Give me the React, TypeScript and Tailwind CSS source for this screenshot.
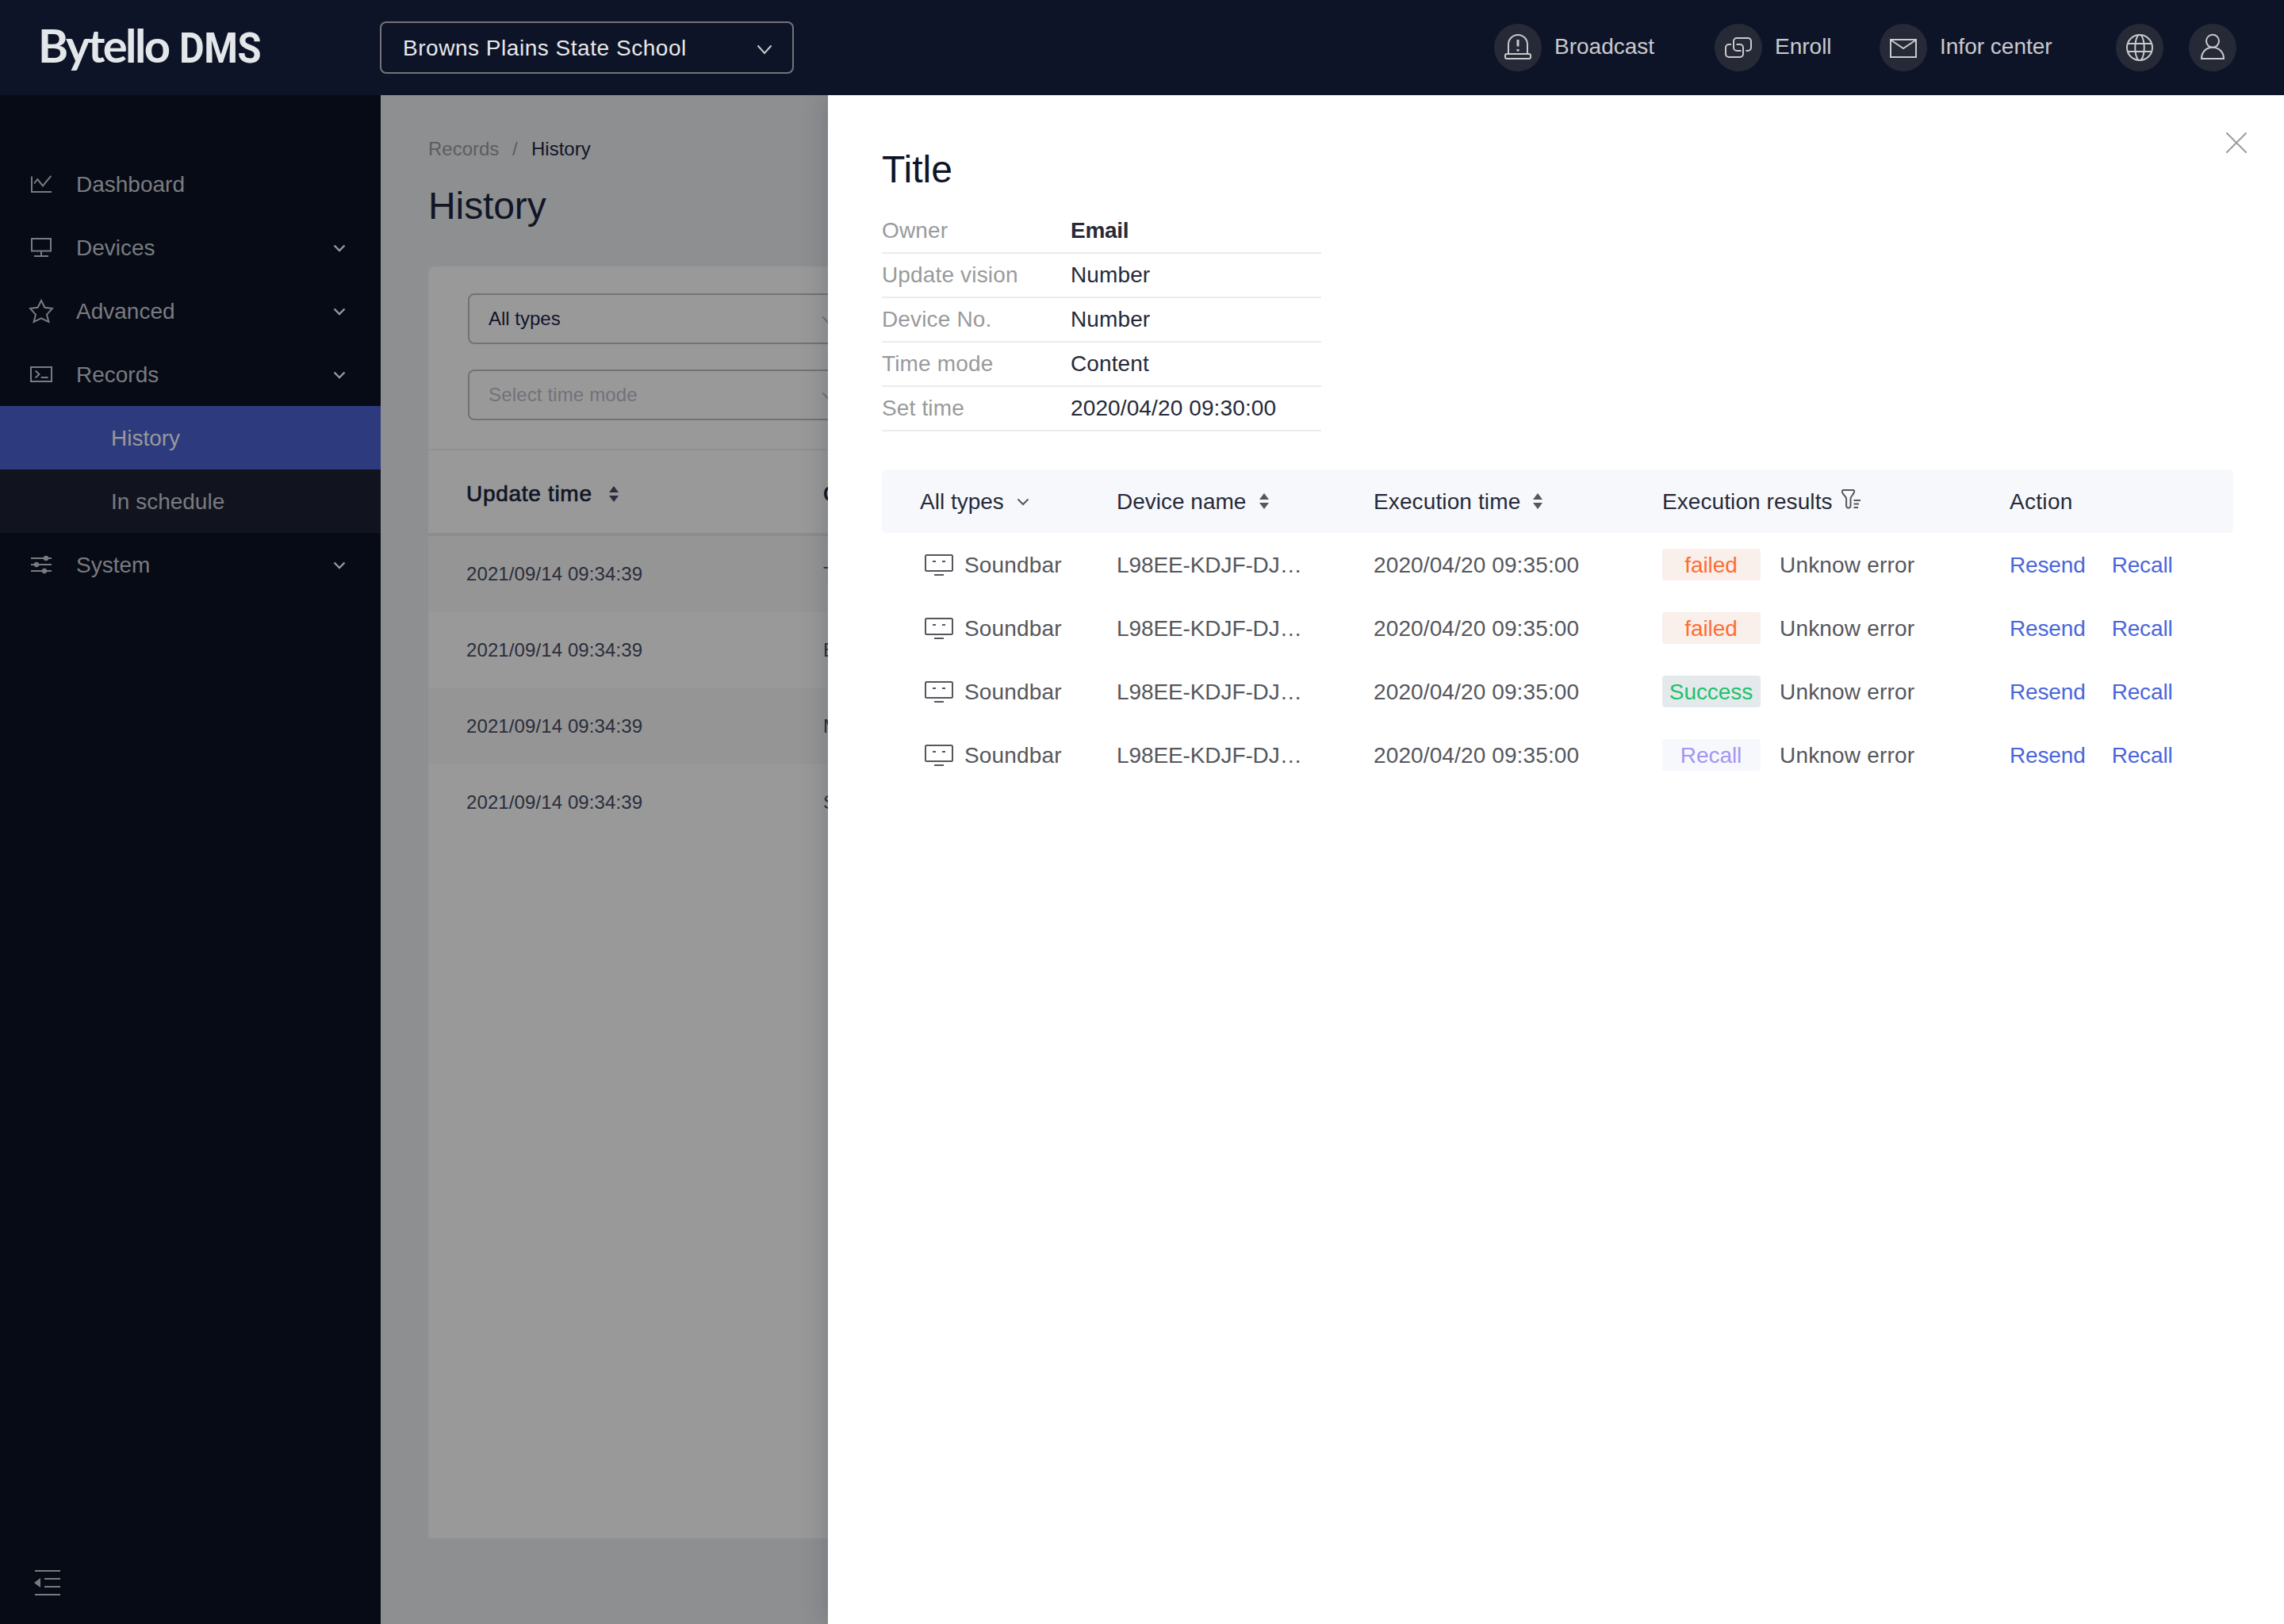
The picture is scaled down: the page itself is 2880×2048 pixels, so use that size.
import type { ReactNode } from 'react';

/* ---------- shared glyphs ---------- */

function Chevron({ className, w = 14, h = 8, stroke = 2.4 }: { className: string; w?: number; h?: number; stroke?: number }) {
  return (
    <svg width={w + 2} height={h + 2} viewBox={`-1 -1 ${w + 2} ${h + 2}`} className={className} fill="none" stroke="currentColor" strokeWidth={stroke}>
      <path d={`M0.5 0.5L${w / 2} ${h - 1}L${w - 0.5} 0.5`} />
    </svg>
  );
}

function SortIcon({ className }: { className: string }) {
  return (
    <svg width="12" height="20" viewBox="0 0 12 20" className={className} fill="currentColor">
      <path d="M6 0L12 8H0zM0 12H12L6 20z" />
    </svg>
  );
}

function HeaderIcon({ children }: { children: ReactNode }) {
  return (
    <span className="flex size-[60px] shrink-0 rounded-full bg-[#262936] text-[#c9cacd]">
      <svg width="60" height="60" viewBox="0 0 60 60" fill="none" stroke="currentColor" strokeWidth="2">
        {children}
      </svg>
    </span>
  );
}

const alarmIcon = (
  <>
    <rect x="14" y="38" width="32" height="6" rx="2" />
    <path d="M18 38V26a12 12 0 0 1 24 0V38" />
    <path d="M30 20V28.5" strokeWidth="3" />
    <path d="M30 32V34.6" strokeWidth="3" />
  </>
);

const enrollIcon = (
  <>
    <path d="M33.5 34H28a4 4 0 0 1-4-4V22a4 4 0 0 1 4-4H42a4 4 0 0 1 4 4v8a4 4 0 0 1-4 4H39.5" />
    <path d="M27.5 26H32a4 4 0 0 1 4 4v8a4 4 0 0 1-4 4H18a4 4 0 0 1-4-4v-8a4 4 0 0 1 4-4H21" />
  </>
);

const mailIcon = (
  <>
    <rect x="14" y="20" width="32" height="22" />
    <path d="M15 21L30 31L45 21" />
  </>
);

const globeIcon = (
  <>
    <circle cx="30" cy="30" r="16" />
    <path d="M15 25H45M15 35H45" />
    <path d="M28 14.5C23 22 23 38 28 45.5M32 14.5C37 22 37 38 32 45.5" />
  </>
);

const userIcon = (
  <>
    <circle cx="30" cy="21.8" r="8" />
    <path d="M16 44C16 35.5 22 29.8 30 29.8S44 35.5 44 44Z" />
  </>
);

/* ---------- sidebar ---------- */

const dashboardIcon = <path d="M4 6.5V26H29M7 15.5L11.3 10L18 18.3L28.3 5.8" />;
const devicesIcon = <path d="M4 5H28V20.5H4ZM16 20.5V27M7 27H25" />;
const starIcon = <path d="M16 3L20.4 11.8L30 13L23 20.7L25.4 30L16 25.4L6.6 30L9 20.7L2 13L11.6 11.8Z" />;
const recordsIcon = <path d="M3 7H29V25H3ZM8.7 11.5L13.5 16L8.7 20.5M15.7 20H24.7" />;
const systemIcon = (
  <>
    <path d="M3 8H29M3 16H29M3 24H29" />
    <g fill="currentColor" stroke="none">
      <circle cx="22" cy="8" r="3.2" />
      <circle cx="10" cy="16" r="3.2" />
      <circle cx="20" cy="24" r="3.2" />
    </g>
  </>
);

function NavItem({ icon, label, expandable = true }: { icon: ReactNode; label: string; expandable?: boolean }) {
  return (
    <div className="flex h-20 items-center pr-11 pl-9 text-[#7a7b80]">
      <svg width="32" height="32" viewBox="0 0 32 32" fill="none" stroke="currentColor" strokeWidth="2">
        {icon}
      </svg>
      <span className="ml-7 flex-1 pt-px">{label}</span>
      {expandable && <Chevron className="mt-px text-[#98989a]" />}
    </div>
  );
}

function Sidebar() {
  return (
    <aside className="flex w-[480px] shrink-0 flex-col bg-[#070b16] pt-[72px] text-[28px]">
      <NavItem icon={dashboardIcon} label="Dashboard" expandable={false} />
      <NavItem icon={devicesIcon} label="Devices" />
      <NavItem icon={starIcon} label="Advanced" />
      <NavItem icon={recordsIcon} label="Records" />
      <div className="flex h-20 items-center bg-[#2d3b7e] pt-px pl-[140px] text-[#999999]">History</div>
      <div className="flex h-20 items-center bg-[#11141f] pt-px pl-[140px] text-[#7a7b80]">In schedule</div>
      <NavItem icon={systemIcon} label="System" />
      <svg width="36" height="32" viewBox="0 0 36 32" className="mt-auto mb-9 ml-[42px] text-[#7a7b80]" fill="currentColor">
        <path d="M2 0H34V2H2zM14 10H34V12H14zM14 20H34V22H14zM2 30H34V32H2zM1 16L9 10V22z" />
      </svg>
    </aside>
  );
}

/* ---------- top bar ---------- */

function TopBar() {
  return (
    <header className="flex h-[120px] shrink-0 items-center bg-[#0e1428] pr-[60px] text-[28px]">
      <div className="flex w-[479px] shrink-0 items-baseline pb-[3px] pl-12 text-[#e3e7ea]">
        <span className="w-[178px] font-['Lato'] text-[58px] leading-[72px] font-bold tracking-[-2.6px]">Bytello</span>
        <span className="w-[120px] origin-left scale-x-[0.92] font-['Roboto'] text-[53px] leading-[72px] font-bold tracking-[-0.5px]">DMS</span>
      </div>
      <div className="flex h-[66px] w-[522px] items-center justify-between rounded-lg border-2 border-[#737377] pr-[25px] pl-[27px] text-[#e7e8ea]">
        <span className="pt-px tracking-[0.53px]">Browns Plains State School</span>
        <Chevron w={18} h={11} stroke={2} className="mt-1 text-[#c9cacd]" />
      </div>
      <div className="ml-auto flex items-center text-[#c9cacd]">
        <HeaderIcon>{alarmIcon}</HeaderIcon>
        <span className="w-[218px] shrink-0 pb-[3px] pl-4">Broadcast</span>
      </div>
      <div className="flex w-[208px] items-center text-[#c9cacd]">
        <HeaderIcon>{enrollIcon}</HeaderIcon>
        <span className="pb-[3px] pl-4">Enroll</span>
      </div>
      <div className="flex w-[298px] items-center text-[#c9cacd]">
        <HeaderIcon>{mailIcon}</HeaderIcon>
        <span className="pb-[3px] pl-4">Infor center</span>
      </div>
      <div className="flex gap-8">
        <HeaderIcon>{globeIcon}</HeaderIcon>
        <HeaderIcon>{userIcon}</HeaderIcon>
      </div>
    </header>
  );
}

/* ---------- history list (behind the drawer) ---------- */

const historyRows = ['T', 'E', 'M', 'S'];

function HistoryPage() {
  return (
    <main className="flex w-[2400px] shrink-0 flex-col bg-[#8e8f91] pr-[60px] pl-[60px]">
      <div className="mt-[52px] flex h-8 items-center text-[24px] text-[#5c5d60]">
        <span className="w-[106px]">Records</span>
        <span className="w-6">/</span>
        <span className="text-[#11152a]">History</span>
      </div>
      <h1 className="mt-6 h-16 text-[48px] leading-[64px] tracking-[-0.1px] text-[#111525]">History</h1>
      <section className="mt-11 h-[1604px] rounded-t-lg bg-[#999999]">
        <div className="flex h-[232px] flex-col gap-8 border-b-2 border-[#8e8f91] pt-[34px] pl-[50px] text-[24px]">
          <div className="flex h-16 w-[480px] items-center justify-between rounded-lg border-2 border-[#727279] pr-3 pl-6 text-[#11152a]">
            <span>All types</span>
            <Chevron w={18} h={11} stroke={2} className="mt-1 text-[#727279]" />
          </div>
          <div className="flex h-16 w-[480px] items-center justify-between rounded-lg border-2 border-[#727279] pr-3 pl-6 text-[#727279]">
            <span className="tracking-[0.15px]">Select time mode</span>
            <Chevron w={18} h={11} stroke={2} className="mt-1 text-[#727279]" />
          </div>
        </div>
        <div className="flex h-[108px] items-center pt-0.5 pl-12 text-[28px] text-[#111525] shadow-[inset_0_-4px_0_#8b8d90]">
          <div className="flex w-[450px] items-center">
            <span className="tracking-[0.7px] [-webkit-text-stroke:0.7px_#111525]">Update time</span>
            <SortIcon className="ml-[21px] text-[#2a2e3c]" />
          </div>
          <span className="[-webkit-text-stroke:0.7px_#111525]">C</span>
        </div>
        {historyRows.map((name) => (
          <div key={name} className="flex h-24 items-center pl-12 text-[24px] text-[#2a2e3c] odd:bg-[#959595]">
            <span className="w-[450px] tracking-[0.1px]">2021/09/14 09:34:39</span>
            <span>{name}</span>
          </div>
        ))}
      </section>
    </main>
  );
}

/* ---------- drawer ---------- */

const details = [
  { label: 'Owner', value: 'Email', strong: true },
  { label: 'Update vision', value: 'Number' },
  { label: 'Device No.', value: 'Number' },
  { label: 'Time mode', value: 'Content' },
  { label: 'Set time', value: '2020/04/20 09:30:00' },
];

const results = [
  { tag: 'failed', tone: 'bg-[#f9efeb] text-[#ff6d33]' },
  { tag: 'failed', tone: 'bg-[#f9efeb] text-[#ff6d33]' },
  { tag: 'Success', tone: 'bg-[#e4e9ec] text-[#1fc16b]' },
  { tag: 'Recall', tone: 'bg-[#f7f8fc] text-[#a296f2]' },
];

function SoundbarIcon() {
  return (
    <svg width="36" height="28" viewBox="0 0 36 28" className="mt-px" fill="none" stroke="currentColor" strokeWidth="2">
      <rect x="1" y="1" width="34" height="20" rx="1.5" />
      <path d="M12 26H24M10 9H14M22 9H26" />
    </svg>
  );
}

function FilterIcon() {
  return (
    <svg width="24" height="26" viewBox="0 0 24 26" className="mb-1.5 ml-[11px] text-[#55575d]" fill="none" stroke="currentColor" strokeWidth="2">
      <path d="M2.5 2H14.5Q16.5 2 16 4.5Q15.8 6 13 9.5Q11.5 11.5 11.5 13V22Q11.3 24.5 8.8 24.5Q6.3 24.5 6.1 22V13Q6.1 11.5 4.2 9.5Q1 6 1 4.2Q.6 2 2.5 2Z" />
      <path d="M15.5 15H24M15.5 19.5H22M15.5 24H21" />
    </svg>
  );
}

function Drawer() {
  return (
    <div className="absolute inset-y-0 right-0 flex w-[1836px] flex-col bg-white pr-16 pl-[68px] text-[28px] shadow-[-2px_0_32px_rgba(10,20,50,0.2)]">
      <svg width="26" height="26" viewBox="0 0 26 26" className="absolute top-[47px] right-[47px] text-[#9b9da1]" stroke="currentColor" strokeWidth="2">
        <path d="M0 0L26 26M26 0L0 26" />
      </svg>
      <h2 className="mt-[62px] h-16 text-[48px] leading-[64px] text-[#0e1428]">Title</h2>
      <dl className="mt-[18px] w-[554px]">
        {details.map((d) => (
          <div key={d.label} className="flex h-14 items-center border-b-2 border-[#eeebea]">
            <dt className="w-[238px] tracking-[0.15px] text-[#999a9c]">{d.label}</dt>
            <dd className={d.strong ? 'font-bold tracking-[-0.3px] text-[#262a38]' : 'tracking-[0.12px] text-[#262a38]'}>{d.value}</dd>
          </div>
        ))}
      </dl>
      <div className="mt-12 grid h-20 grid-cols-[248px_324px_364px_438px_1fr] items-center rounded-md bg-[#f7f8fc] pl-12 text-[#262a38]">
        <div className="flex items-center">
          <span className="pt-0.5">All types</span>
          <Chevron stroke={2} className="mt-0.5 ml-4 text-[#55575d]" />
        </div>
        <div className="flex items-center">
          <span className="pt-0.5">Device name</span>
          <SortIcon className="ml-[17px] text-[#55575d]" />
        </div>
        <div className="flex items-center">
          <span className="pt-0.5 tracking-[0.12px]">Execution time</span>
          <SortIcon className="ml-4 text-[#55575d]" />
        </div>
        <div className="flex items-center">
          <span className="pt-0.5 tracking-[0.08px]">Execution results</span>
          <FilterIcon />
        </div>
        <span className="pt-0.5 tracking-[0.3px]">Action</span>
      </div>
      {results.map((r, i) => (
        <div key={i} className="grid h-20 grid-cols-[248px_324px_364px_438px_1fr] items-center pl-12 text-[#55575d]">
          <div className="flex items-center gap-[14px] pl-1.5">
            <SoundbarIcon />
            <span className="pt-0.5 tracking-[0.15px]">Soundbar</span>
          </div>
          <span className="pt-0.5 tracking-[-0.1px]">L98EE-KDJF-DJ…</span>
          <span className="pt-0.5 tracking-[0.12px]">2020/04/20 09:35:00</span>
          <div className="flex items-center">
            <span className={`flex h-10 w-[124px] items-center justify-center rounded pt-0.5 pr-px tracking-[-0.05px] ${r.tone}`}>{r.tag}</span>
            <span className="ml-6 pt-0.5 tracking-[0.18px]">Unknow error</span>
          </div>
          <div className="flex gap-[33px] pt-0.5 tracking-[-0.15px] text-[#4a66dc]">
            <span>Resend</span>
            <span>Recall</span>
          </div>
        </div>
      ))}
    </div>
  );
}

export default function App() {
  return (
    <div className="flex h-[2048px] w-[2880px] flex-col overflow-hidden font-['Liberation_Sans',Arial,sans-serif]">
      <TopBar />
      <div className="relative flex min-h-0 flex-1 overflow-hidden">
        <Sidebar />
        <HistoryPage />
        <Drawer />
      </div>
    </div>
  );
}
